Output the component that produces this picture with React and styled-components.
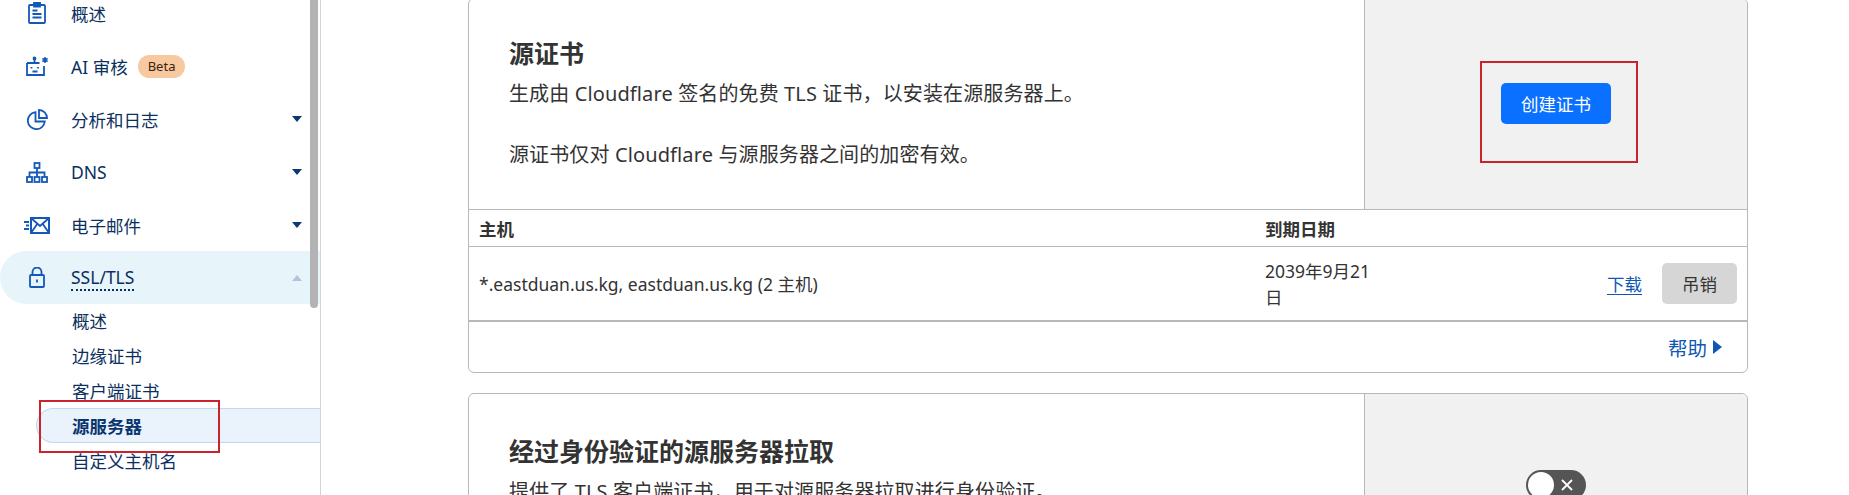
import React from 'react';
import styled, { createGlobalStyle } from 'styled-components';

const GlobalStyle = createGlobalStyle`
  html, body {
    margin: 0;
    padding: 0;
    background: #fff;
    overflow: hidden;
  }
  * {
    box-sizing: border-box;
  }
`;

const Page = styled.div`
  display: flex;
  height: 495px;
  overflow: hidden;
  font-family: "Noto Sans", "Noto Sans CJK SC", sans-serif;
  color: #333;
`;

const Sidebar = styled.aside`
  position: relative;
  flex: 0 0 321px;
  height: 495px;
  border-right: 1px solid #d4d4d4;
`;

const NavList = styled.nav`
  display: flex;
  flex-direction: column;
  margin-top: -13px;
`;

const NavRow = styled.div`
  display: flex;
  align-items: center;
  height: 52.9px;
  padding-left: 24px;
  padding-right: 18px;
  font-size: 17.5px;
  color: #0b2f5e;
  background: ${({ $open }) => ($open ? '#e7f4fa' : 'transparent')};
  border-radius: ${({ $open }) => ($open ? '27px 0 0 27px' : '0')};
`;

const IconSlot = styled.span`
  display: flex;
  align-items: center;
  justify-content: center;
  flex: 0 0 26px;
  margin-right: 21px;
  color: #1259b8;
`;

const NavLabel = styled.span`
  flex: 1;
  display: flex;
  align-items: center;
  gap: 10px;
`;

const Dotted = styled.span`
  line-height: 24px;
  border-bottom: 2px dotted #0b2f5e;
`;

const Beta = styled.span`
  display: inline-block;
  height: 23px;
  line-height: 22px;
  padding: 0 10px;
  border-radius: 12px;
  background: #f8c8a0;
  color: #3d2410;
  font-size: 13px;
`;

const Caret = styled.span`
  width: 0;
  height: 0;
  border-left: 5.5px solid transparent;
  border-right: 5.5px solid transparent;
  ${({ $up }) =>
    $up
      ? 'border-bottom: 6px solid #b5c5d8;'
      : 'border-top: 6px solid #0b3a72;'}
`;

const SubList = styled.div`
  display: flex;
  flex-direction: column;
  margin-top: -1px;
  padding-left: 36px;
`;

const SubItem = styled.div`
  position: relative;
  display: flex;
  align-items: center;
  height: 35px;
  padding-left: 36px;
  font-size: 17.5px;
  color: #0b2f5e;
  ${({ $active }) =>
    $active &&
    `
    font-weight: 700;
    color: #0a3670;
    background: #eaf2fc;
    border: 1px solid #c3d7ee;
    border-right: 0;
    border-radius: 18px 0 0 18px;
    padding-left: 35px;
  `}
`;

const SideMark = styled.span`
  position: absolute;
  left: 2px;
  top: -9px;
  width: 181px;
  height: 53px;
  border: 2px solid #c9232d;
`;

const Scrollbar = styled.div`
  position: absolute;
  top: 0;
  left: 310px;
  width: 8px;
  height: 308px;
  background: #b3b3b3;
  border-radius: 0 0 4px 4px;
`;

const Main = styled.main`
  flex: 1;
  display: flex;
  flex-direction: column;
  gap: 20px;
  margin-top: -2px;
  padding-left: 147px;
`;

const Card = styled.section`
  flex: none;
  width: 1280px;
  border: 1px solid #b8b8b8;
  border-radius: 6px;
  overflow: hidden;
  background: #fff;
`;

const CardTop = styled.div`
  display: flex;
  height: ${({ $h }) => $h}px;
`;

const Info = styled.div`
  flex: 1;
  padding: ${({ $pad }) => $pad}px 40px 0;
`;

const Title = styled.h2`
  margin: 0 0 9px;
  font-size: 25px;
  line-height: 34px;
  font-weight: 700;
  color: #333;
`;

const Desc = styled.p`
  margin: 0 0 30px;
  font-size: 20px;
  line-height: 30.5px;
  letter-spacing: 0.12px;
  color: #333;
`;

const Panel = styled.div`
  flex: 0 0 383px;
  display: flex;
  align-items: center;
  justify-content: center;
  padding-bottom: ${({ $lift }) => $lift || 0}px;
  background: #f1f1f1;
  border-left: 1px solid #b8b8b8;
`;

const MarkedButton = styled.div`
  position: relative;
`;

const ButtonMark = styled.span`
  position: absolute;
  left: -21px;
  top: -22px;
  width: 158px;
  height: 102px;
  border: 2px solid #c9232d;
`;

const PrimaryButton = styled.button`
  display: block;
  width: 110px;
  height: 41px;
  padding: 0;
  border: 0;
  border-radius: 5px;
  background: #0a70ff;
  color: #fff;
  font: inherit;
  font-size: 17.5px;
`;

const TableHead = styled.div`
  display: grid;
  grid-template-columns: 786px 1fr;
  align-items: center;
  height: 38px;
  padding-left: 10px;
  border-top: 1px solid #b8b8b8;
  border-bottom: 1px solid #b8b8b8;
  font-size: 17.5px;
  font-weight: 700;
`;

const TableRow = styled.div`
  display: grid;
  grid-template-columns: 786px 116px 1fr;
  align-items: center;
  height: 75px;
  padding: 0 10px 0 10px;
  border-bottom: 2px solid #b8b8b8;
  font-size: 17.5px;
  line-height: 26px;
`;

const Actions = styled.div`
  display: flex;
  align-items: center;
  justify-content: flex-end;
  gap: 20px;
`;

const DownloadLink = styled.a`
  color: #0f57b5;
  text-decoration: underline;
  text-underline-offset: 3px;
`;

const GreyButton = styled.button`
  width: 75px;
  height: 41px;
  padding: 0;
  border: 0;
  border-radius: 5px;
  background: #d6d6d6;
  color: #333;
  font: inherit;
`;

const CardFoot = styled.div`
  display: flex;
  align-items: center;
  justify-content: flex-end;
  gap: 6px;
  height: 50px;
  padding-right: 25px;
  font-size: 19.5px;
  color: #0f57b5;
`;

const HelpArrow = styled.span`
  width: 0;
  height: 0;
  border-top: 7.5px solid transparent;
  border-bottom: 7.5px solid transparent;
  border-left: 9px solid #0f57b5;
`;

const Toggle = styled.div`
  display: flex;
  align-items: center;
  width: 60px;
  height: 30px;
  padding: 0 2px;
  border-radius: 15px;
  background: #555;
  color: #fff;
`;

const Knob = styled.span`
  width: 26px;
  height: 26px;
  margin-right: 7px;
  border-radius: 50%;
  background: #fff;
`;

const Svg = styled.svg`
  display: block;
  fill: none;
  stroke: currentColor;
  stroke-width: 1.8;
`;

const ClipboardIcon = () => (
  <Svg width="18" height="22" viewBox="0 0 18 22">
    <rect x="1" y="3" width="16" height="18" rx="1" />
    <path d="M6 1h6v3.500H6zM4.500 8.500h5M4.500 12h9M4.500 15.500h9" />
  </Svg>
);

const BotIcon = () => (
  <Svg width="24" height="20" viewBox="0 0 24 20">
    <path d="M9.500 3.500V7M2 7h12.500M2 7v12h17V10" />
    <circle cx="9.500" cy="2.500" r="1" />
    <path d="M6.500 11v1.500M13 11v1.500M7.500 15.500h5" />
    <path d="M20 1v6M17.400 2.500l5.200 3M22.600 2.500l-5.200 3" strokeWidth="1.500" />
  </Svg>
);

const PieIcon = () => (
  <Svg width="21" height="21" viewBox="0 0 21 21">
    <path d="M8.500 3.200a8.500 8.500 0 1 0 9.300 9.300H8.500z" />
    <path d="M12 1a8 8 0 0 1 8 8h-8z" />
  </Svg>
);

const SitemapIcon = () => (
  <Svg width="22" height="21" viewBox="0 0 22 21">
    <rect x="8.500" y="1" width="5" height="5" />
    <rect x="1" y="15" width="5" height="5" />
    <rect x="8.500" y="15" width="5" height="5" />
    <rect x="16" y="15" width="5" height="5" />
    <path d="M11 6v9M3.500 15v-4.500h15V15" />
  </Svg>
);

const MailIcon = () => (
  <Svg width="26" height="17" viewBox="0 0 26 17">
    <rect x="7" y="1" width="18" height="15" strokeWidth="2" />
    <path d="M7 1l9 8 9-8M7 16l6.500-9.500M25 16l-6.500-9.500M0 5h5M2 8.500h3M0 12h5" />
  </Svg>
);

const LockIcon = () => (
  <Svg width="16" height="21" viewBox="0 0 16 21">
    <rect x="1" y="8" width="14" height="12" rx="1" />
    <path d="M3.500 8V5a4.500 4.500 0 0 1 9 0v3M8 12.500v3" />
  </Svg>
);

const CrossIcon = () => (
  <Svg width="12" height="12" viewBox="0 0 12 12">
    <path d="M1 1l10 10M11 1L1 11" />
  </Svg>
);

const App = () => {
  return (
    <>
      <GlobalStyle />
      <Page>
        <Sidebar>
          <NavList>
            <NavRow>
              <IconSlot><ClipboardIcon /></IconSlot>
              <NavLabel>概述</NavLabel>
            </NavRow>
            <NavRow>
              <IconSlot><BotIcon /></IconSlot>
              <NavLabel>AI 审核 <Beta>Beta</Beta></NavLabel>
            </NavRow>
            <NavRow>
              <IconSlot><PieIcon /></IconSlot>
              <NavLabel>分析和日志</NavLabel>
              <Caret />
            </NavRow>
            <NavRow>
              <IconSlot><SitemapIcon /></IconSlot>
              <NavLabel>DNS</NavLabel>
              <Caret />
            </NavRow>
            <NavRow>
              <IconSlot><MailIcon /></IconSlot>
              <NavLabel>电子邮件</NavLabel>
              <Caret />
            </NavRow>
            <NavRow $open>
              <IconSlot><LockIcon /></IconSlot>
              <NavLabel><Dotted>SSL/TLS</Dotted></NavLabel>
              <Caret $up />
            </NavRow>
            <SubList>
              <SubItem>概述</SubItem>
              <SubItem>边缘证书</SubItem>
              <SubItem>客户端证书</SubItem>
              <SubItem $active>
                源服务器
                <SideMark />
              </SubItem>
              <SubItem>自定义主机名</SubItem>
            </SubList>
          </NavList>
          <Scrollbar />
        </Sidebar>

        <Main>
          <Card>
            <CardTop $h={210}>
              <Info $pad={37}>
                <Title>源证书</Title>
                <Desc>
                  生成由 Cloudflare 签名的免费 TLS 证书，以安装在源服务器上。
                </Desc>
                <Desc>源证书仅对 Cloudflare 与源服务器之间的加密有效。</Desc>
              </Info>
              <Panel $lift={2}>
                <MarkedButton>
                  <PrimaryButton>创建证书</PrimaryButton>
                  <ButtonMark />
                </MarkedButton>
              </Panel>
            </CardTop>
            <TableHead>
              <span>主机</span>
              <span>到期日期</span>
            </TableHead>
            <TableRow>
              <span>*.eastduan.us.kg, eastduan.us.kg (2 主机)</span>
              <span>2039年9月21日</span>
              <Actions>
                <DownloadLink>下载</DownloadLink>
                <GreyButton>吊销</GreyButton>
              </Actions>
            </TableRow>
            <CardFoot>
              帮助
              <HelpArrow />
            </CardFoot>
          </Card>

          <Card>
            <CardTop $h={182}>
              <Info $pad={40}>
                <Title>经过身份验证的源服务器拉取</Title>
                <Desc>提供了 TLS 客户端证书，用于对源服务器拉取进行身份验证。</Desc>
              </Info>
              <Panel>
                <Toggle>
                  <Knob />
                  <CrossIcon />
                </Toggle>
              </Panel>
            </CardTop>
          </Card>
        </Main>
      </Page>
    </>
  );
};

export default App;
